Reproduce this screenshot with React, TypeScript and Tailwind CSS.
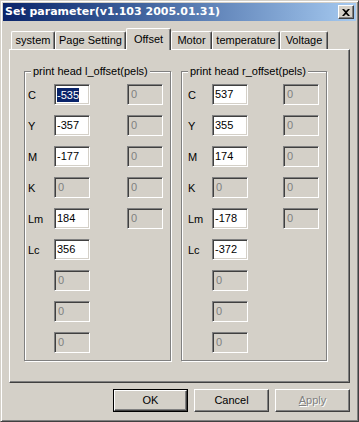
import clsx from "clsx";

const FACE = "bg-[#d4d0c8]";

interface Row {
  label: string;
  value?: string;
  selected?: boolean;
  second?: boolean;
}

const leftRows: Row[] = [
  { label: "C", value: "-535", selected: true, second: true },
  { label: "Y", value: "-357", second: true },
  { label: "M", value: "-177", second: true },
  { label: "K", second: true },
  { label: "Lm", value: "184", second: true },
  { label: "Lc", value: "356" },
  { label: "" },
  { label: "" },
  { label: "" },
];

const rightRows: Row[] = [
  { label: "C", value: "537", second: true },
  { label: "Y", value: "355", second: true },
  { label: "M", value: "174", second: true },
  { label: "K", second: true },
  { label: "Lm", value: "-178", second: true },
  { label: "Lc", value: "-372" },
  { label: "" },
  { label: "" },
  { label: "" },
];

const tabs = ["system", "Page Setting", "Offset", "Motor", "temperature", "Voltage"];
const tabWidths = ["w-[44px]", "w-[71px]", "w-[45px]", "w-[41px]", "w-[68px]", "w-[48px]"];

function Field({ value, selected, width }: { value?: string; selected?: boolean; width: string }) {
  const disabled = value === undefined;
  return (
    <div
      className={clsx(
        "h-[21px] flex items-center pl-[2px] text-[11px] border border-t-[#808080] border-l-[#808080] border-b-white border-r-white shadow-[inset_1px_1px_0_#404040,inset_-1px_-1px_0_#d4d0c8]",
        width,
        disabled ? "bg-[#d4d0c8] text-[#808080]" : "bg-white text-black"
      )}
    >
      {disabled ? (
        <span className="pl-[1px]">0</span>
      ) : selected ? (
        <span className="bg-[#0a246a] text-white leading-[14px]">{value}</span>
      ) : (
        <span>{value}</span>
      )}
    </div>
  );
}

function Group({
  title,
  rows,
  width,
  labelPad,
  labelW,
  gap,
  fieldW,
}: {
  title: string;
  rows: Row[];
  width: string;
  labelPad: string;
  labelW: string;
  gap: string;
  fieldW: string;
}) {
  return (
    <div
      className={clsx(
        "relative h-[290px] border border-[#808080] shadow-[1px_1px_0_#fff,inset_1px_1px_0_#fff] pt-[12px]",
        width,
        labelPad
      )}
    >
      <span className={clsx("absolute left-[6px] -top-[7px] px-[2px] leading-[13px] text-[11px]", FACE)}>
        {title}
      </span>
      <div className="flex flex-col gap-[10px]">
        {rows.map((r, i) => (
          <div key={i} className="flex items-center h-[21px]">
            <span className={clsx("text-[11px] pt-[1px]", labelW)}>{r.label}</span>
            {r.label === "" ? (
              <Field width={fieldW} />
            ) : (
              <Field value={r.value} selected={r.selected} width={fieldW} />
            )}
            {r.second && (
              <div className={gap}>
                <Field width={fieldW} />
              </div>
            )}
          </div>
        ))}
      </div>
    </div>
  );
}

function Btn({ label, isDefault, disabled }: { label: React.ReactNode; isDefault?: boolean; disabled?: boolean }) {
  const inner = (
    <div
      className={clsx(
        "flex-1 flex items-center justify-center text-[11px] border border-t-white border-l-white border-b-[#404040] border-r-[#404040] shadow-[inset_-1px_-1px_0_#808080]",
        disabled ? "text-[#808080] [text-shadow:1px_1px_0_#fff]" : "text-black"
      )}
    >
      {label}
    </div>
  );
  return (
    <div className={clsx("w-[75px] h-[23px] flex", isDefault && "border border-black")}>{inner}</div>
  );
}

export default function App() {
  return (
    <div
      className={clsx(
        "w-[359px] h-[422px] p-[2px] border border-t-[#d4d0c8] border-l-[#d4d0c8] border-b-[#404040] border-r-[#404040] shadow-[inset_1px_1px_0_#fff,inset_-1px_-1px_0_#808080] text-black",
        FACE
      )}
      style={{ fontFamily: '"Liberation Sans", Arial, sans-serif' }}
    >
      {/* title bar */}
      <div className="h-[18px] flex items-center bg-linear-to-r from-[#0a246a] to-[#a6caf0] pl-[2px] pr-[2px]">
        <span
          className="flex-1 text-white font-bold text-[12px] leading-[18px]"
          style={{ fontFamily: '"DejaVu Sans", sans-serif', fontSize: 11 }}
        >
          Set parameter(v1.103 2005.01.31)
        </span>
        <div className="w-[16px] h-[14px] flex items-center justify-center bg-[#d4d0c8] border border-t-white border-l-white border-b-[#404040] border-r-[#404040] shadow-[inset_-1px_-1px_0_#808080]">
          <svg width="8" height="7" viewBox="0 0 8 7">
            <path d="M0 0h2l2 2 2-2h2L5 3.5 8 7H6L4 5 2 7H0l3-3.5z" fill="#000" />
          </svg>
        </div>
      </div>

      <div className="px-[6px]">
        {/* tabs */}
        <div className="mt-[7px] h-[21px] flex items-end pl-[2px]">
          {tabs.map((t, i) => {
            const sel = t === "Offset";
            return (
              <div
                key={t}
                className={clsx(
                  "flex items-center justify-center text-[11px] border-t border-l border-white border-r border-r-[#404040] rounded-t-[2px] shadow-[inset_-1px_0_0_#808080]",
                  tabWidths[i],
                  FACE,
                  sel ? "h-[22px] -mb-[1px] relative z-10" : "h-[18px]"
                )}
              >
                {t}
              </div>
            );
          })}
        </div>

        {/* panel */}
        <div className="h-[334px] border border-t-white border-l-white border-b-[#404040] border-r-[#404040] shadow-[inset_-1px_-1px_0_#808080] pl-[14px] pt-[21px] flex gap-[10px]">
          <Group
            title="print head l_offset(pels)"
            rows={leftRows}
            width="w-[147px]"
            labelPad="pl-[3px]"
            labelW="w-[26px]"
            gap="ml-[37px]"
            fieldW="w-[36px]"
          />
          <Group
            title="print head r_offset(pels)"
            rows={rightRows}
            width="w-[146px]"
            labelPad="pl-[6px]"
            labelW="w-[24px]"
            gap="ml-[35px]"
            fieldW="w-[36px]"
          />
        </div>

        {/* buttons */}
        <div className="mt-[6px] flex justify-end gap-[6px]">
          <Btn label="OK" isDefault />
          <Btn label="Cancel" />
          <Btn
            label={
              <span>
                <span className="underline">A</span>pply
              </span>
            }
            disabled
          />
        </div>
      </div>
    </div>
  );
}
